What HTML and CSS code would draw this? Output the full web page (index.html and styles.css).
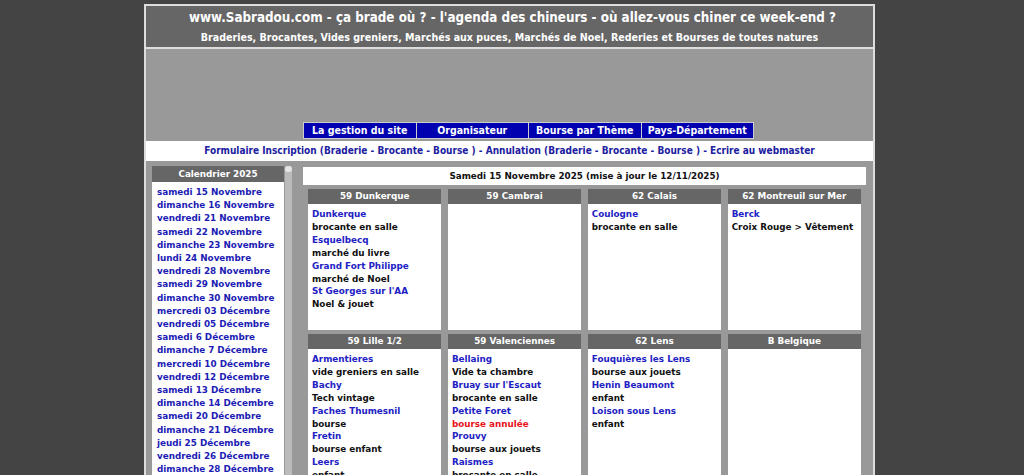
FILE: index.html
```html
<!DOCTYPE html>
<html lang="fr">
<head>
    <meta charset="UTF-8">
    <title>Sabradou - ça brade où ?</title>
    <link rel="stylesheet" href="styles.css">
</head>
<body>
    <div class="page">
        <div class="header">
            <h1>www.Sabradou.com - ça brade où ? - l'agenda des chineurs - où allez-vous chiner ce week-end ?</h1>
            <h2>Braderies, Brocantes, Vides greniers, Marchés aux puces, Marchés de Noel, Rederies et Bourses de toutes natures</h2>
        </div>
        <div class="banner">
            <div class="nav">
                <a href="#">La gestion du site</a>
                <a href="#">Organisateur</a>
                <a href="#">Bourse par Thème</a>
                <a href="#">Pays-Département</a>
            </div>
        </div>
        <div class="links">
            <a href="#">Formulaire Inscription (Braderie - Brocante - Bourse ) - Annulation (Braderie - Brocante - Bourse ) - Ecrire au webmaster</a>
        </div>
        <div class="main">
            <div class="side">
                <div class="calendar">
                    <div class="cal-title">Calendrier 2025</div>
                    <ul class="cal-list">
                        <li><a href="#">samedi 15 Novembre</a></li>
                        <li><a href="#">dimanche 16 Novembre</a></li>
                        <li><a href="#">vendredi 21 Novembre</a></li>
                        <li><a href="#">samedi 22 Novembre</a></li>
                        <li><a href="#">dimanche 23 Novembre</a></li>
                        <li><a href="#">lundi 24 Novembre</a></li>
                        <li><a href="#">vendredi 28 Novembre</a></li>
                        <li><a href="#">samedi 29 Novembre</a></li>
                        <li><a href="#">dimanche 30 Novembre</a></li>
                        <li><a href="#">mercredi 03 Décembre</a></li>
                        <li><a href="#">vendredi 05 Décembre</a></li>
                        <li><a href="#">samedi 6 Décembre</a></li>
                        <li><a href="#">dimanche 7 Décembre</a></li>
                        <li><a href="#">mercredi 10 Décembre</a></li>
                        <li><a href="#">vendredi 12 Décembre</a></li>
                        <li><a href="#">samedi 13 Décembre</a></li>
                        <li><a href="#">dimanche 14 Décembre</a></li>
                        <li><a href="#">samedi 20 Décembre</a></li>
                        <li><a href="#">dimanche 21 Décembre</a></li>
                        <li><a href="#">jeudi 25 Décembre</a></li>
                        <li><a href="#">vendredi 26 Décembre</a></li>
                        <li><a href="#">dimanche 28 Décembre</a></li>
                        <li><a href="#">mercredi 31 Décembre</a></li>
                    </ul>
                </div>
                <div class="scrollbar"><div class="thumb"></div></div>
            </div>
            <div class="content">
                <div class="day-title">Samedi 15 Novembre 2025 (mise à jour le 12/11/2025)</div>
                <div class="grid">
                    <div class="box">
                        <div class="box-title">59 Dunkerque</div>
                        <div class="box-body">
                            <a href="#">Dunkerque</a><p>brocante en salle</p>
                            <a href="#">Esquelbecq</a><p>marché du livre</p>
                            <a href="#">Grand Fort Philippe</a><p>marché de Noel</p>
                            <a href="#">St Georges sur l'AA</a><p>Noel &amp; jouet</p>
                        </div>
                    </div>
                    <div class="box">
                        <div class="box-title">59 Cambrai</div>
                        <div class="box-body"></div>
                    </div>
                    <div class="box">
                        <div class="box-title">62 Calais</div>
                        <div class="box-body">
                            <a href="#">Coulogne</a><p>brocante en salle</p>
                        </div>
                    </div>
                    <div class="box">
                        <div class="box-title">62 Montreuil sur Mer</div>
                        <div class="box-body">
                            <a href="#">Berck</a><p>Croix Rouge &gt; Vêtement</p>
                        </div>
                    </div>
                    <div class="box">
                        <div class="box-title">59 Lille 1/2</div>
                        <div class="box-body">
                            <a href="#">Armentieres</a><p>vide greniers en salle</p>
                            <a href="#">Bachy</a><p>Tech vintage</p>
                            <a href="#">Faches Thumesnil</a><p>bourse</p>
                            <a href="#">Fretin</a><p>bourse enfant</p>
                            <a href="#">Leers</a><p>enfant</p>
                        </div>
                    </div>
                    <div class="box">
                        <div class="box-title">59 Valenciennes</div>
                        <div class="box-body">
                            <a href="#">Bellaing</a><p>Vide ta chambre</p>
                            <a href="#">Bruay sur l'Escaut</a><p>brocante en salle</p>
                            <a href="#">Petite Foret</a><p class="cancel">bourse annulée</p>
                            <a href="#">Prouvy</a><p>bourse aux jouets</p>
                            <a href="#">Raismes</a><p>brocante en salle</p>
                        </div>
                    </div>
                    <div class="box">
                        <div class="box-title">62 Lens</div>
                        <div class="box-body">
                            <a href="#">Fouquières les Lens</a><p>bourse aux jouets</p>
                            <a href="#">Henin Beaumont</a><p>enfant</p>
                            <a href="#">Loison sous Lens</a><p>enfant</p>
                        </div>
                    </div>
                    <div class="box">
                        <div class="box-title">B Belgique</div>
                        <div class="box-body"></div>
                    </div>
                </div>
            </div>
        </div>
    </div>
</body>
</html>
```

FILE: styles.css
```css
* {
    margin: 0;
    padding: 0;
}
body {
    background: #444;
    font-family: "DejaVu Sans", Verdana, sans-serif;
    font-weight: bold;
    font-size: 8.8px;
}
a {
    text-decoration: none;
    color: #1c1cb4;
}
.page {
    width: 727px;
    margin: 4px 0 0 144px;
    border: 2px solid #ddd;
    border-bottom: none;
}
.header {
    background: #666;
    color: #fff;
    height: 41px;
    border-bottom: 2px solid #ddd;
    text-align: center;
    font-family: "DejaVu Sans Condensed", sans-serif;
}
.header h1 {
    font-size: 13.3px;
    line-height: 23px;
    padding-left: 6px;
}
.header h2 {
    font-size: 10.6px;
    line-height: 17px;
}
.banner {
    background: #999;
    height: 92px;
    display: flex;
    align-items: flex-end;
}
.nav {
    display: flex;
    margin: 0 0 2px 157px;
}
.nav a {
    width: 111.5px;
    height: 15px;
    line-height: 15px;
    background: #0000b0;
    border: 1px solid #ccc;
    border-left: none;
    color: #fff;
    text-align: center;
    font-family: "DejaVu Sans Condensed", sans-serif;
    font-size: 10.5px;
}
.nav a:first-child {
    border-left: 1px solid #ccc;
}
.links {
    background: #fff;
    height: 20px;
    line-height: 20px;
    text-align: center;
    font-family: "DejaVu Sans Condensed", sans-serif;
    font-size: 10px;
}
.links a {
    color: #2020a0;
}
.main {
    background: #999;
    display: flex;
    gap: 11px;
    padding: 5px 7px 0 6px;
    height: 313px;
    overflow: hidden;
}
.side {
    display: flex;
    gap: 1px;
}
.calendar {
    width: 132px;
}
.cal-title {
    background: #666;
    color: #fff;
    height: 16px;
    line-height: 16px;
    text-align: center;
}
.cal-list {
    background: #fff;
    list-style: none;
    padding: 4px 0 0 5px;
    line-height: 13.2px;
}
.scrollbar {
    width: 7px;
    background: #bbb;
    border-radius: 3px 3px 0 0;
}
.thumb {
    height: 6px;
    background: #e4e4e4;
    border-radius: 3px;
}
.content {
    flex: 1;
    padding-top: 1px;
}
.day-title {
    background: #fff;
    color: #111;
    height: 18px;
    line-height: 18px;
    text-align: center;
}
.grid {
    display: grid;
    grid-template-columns: repeat(4, 1fr);
    gap: 4px 6.5px;
    margin: 4px 5px 0;
}
.box-title {
    background: #666;
    color: #fff;
    height: 15px;
    line-height: 15px;
    text-align: center;
}
.box-body {
    background: #fff;
    height: 126px;
    padding: 4px 4px 0;
    box-sizing: border-box;
    line-height: 12.9px;
}
.box-body a {
    display: block;
    color: #2222c4;
}
.box-body p {
    color: #111;
}
.box-body p.cancel {
    color: #e8141c;
}
```
